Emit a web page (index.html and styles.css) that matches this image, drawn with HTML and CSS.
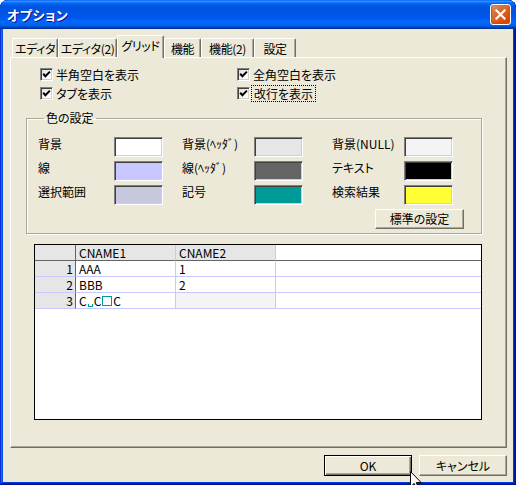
FILE: index.html
```html
<!DOCTYPE html>
<html lang="ja">
<head>
<meta charset="utf-8">
<title>オプション</title>
<link rel="stylesheet" href="styles.css">
</head>
<body>
<div class="window">
  <div class="titlebar">
    <span class="title">オプション</span>
    <span class="close">
      <svg width="11" height="11" viewBox="0 0 11 11"><path d="M1.5 1.5 L9.5 9.5 M9.5 1.5 L1.5 9.5" stroke="#fff" stroke-width="2.2" stroke-linecap="square"/></svg>
    </span>
  </div>
  <div class="client">
    <div class="tabs">
      <div class="tab tab-w46">エディタ</div>
      <div class="tab tab-w59">エディタ(2)</div>
      <div class="tab tab-w47 active">グリッド</div>
      <div class="tab tab-w37">機能</div>
      <div class="tab tab-w53">機能(2)</div>
      <div class="tab tab-w42">設定</div>
    </div>
    <div class="panel">
      <div class="checks">
        <label class="check"><span class="box"><svg width="9" height="9" viewBox="0 0 9 9"><path d="M1.2 3.8 L3.4 6.2 L7.9 1.6" fill="none" stroke="#000" stroke-width="2"/></svg></span><span>半角空白を表示</span></label>
        <label class="check"><span class="box"><svg width="9" height="9" viewBox="0 0 9 9"><path d="M1.2 3.8 L3.4 6.2 L7.9 1.6" fill="none" stroke="#000" stroke-width="2"/></svg></span><span>全角空白を表示</span></label>
        <label class="check"><span class="box"><svg width="9" height="9" viewBox="0 0 9 9"><path d="M1.2 3.8 L3.4 6.2 L7.9 1.6" fill="none" stroke="#000" stroke-width="2"/></svg></span><span>タブを表示</span></label>
        <label class="check"><span class="box"><svg width="9" height="9" viewBox="0 0 9 9"><path d="M1.2 3.8 L3.4 6.2 L7.9 1.6" fill="none" stroke="#000" stroke-width="2"/></svg></span><span class="focus">改行を表示</span></label>
      </div>
      <fieldset class="group">
        <legend>色の設定</legend>
        <div class="colors">
          <span class="clabel">背景</span><span class="swatch sw-white"></span>
          <span class="clabel">背景(ﾍｯﾀﾞ)</span><span class="swatch sw-header"></span>
          <span class="clabel">背景(NULL)</span><span class="swatch sw-null"></span>
          <span class="clabel">線</span><span class="swatch sw-line"></span>
          <span class="clabel">線(ﾍｯﾀﾞ)</span><span class="swatch sw-hline"></span>
          <span class="clabel">テキスト</span><span class="swatch sw-text"></span>
          <span class="clabel">選択範囲</span><span class="swatch sw-select"></span>
          <span class="clabel">記号</span><span class="swatch sw-symbol"></span>
          <span class="clabel">検索結果</span><span class="swatch sw-search"></span>
        </div>
        <div class="group-actions">
          <button class="btn btn-default-set">標準の設定</button>
        </div>
      </fieldset>
      <div class="grid">
        <div class="cell head corner"></div>
        <div class="cell head">CNAME1</div>
        <div class="cell head">CNAME2</div>
        <div class="cell head filler"></div>

        <div class="cell rowhead">1</div>
        <div class="cell">AAA</div>
        <div class="cell">1</div>
        <div class="cell filler"></div>

        <div class="cell rowhead">2</div>
        <div class="cell">BBB</div>
        <div class="cell">2</div>
        <div class="cell filler"></div>

        <div class="cell rowhead">3</div>
        <div class="cell">C<span class="sp-half"></span>C<span class="sp-full"></span>C</div>
        <div class="cell null"></div>
        <div class="cell filler"></div>
      </div>
    </div>
    <div class="buttons">
      <button class="btn btn-ok">OK</button>
      <button class="btn">キャンセル</button>
    </div>
  </div>
  <svg class="cursor" width="12" height="19" viewBox="0 0 12 19"><path d="M0.5 0.5 L0.5 16 L4.2 12.4 L6.8 18.5 L8.8 17.6 L6.3 11.6 L11.2 11.6 Z" fill="#fff" stroke="#000" stroke-width="1"/></svg>
</div>
</body>
</html>
```
FILE: styles.css
```css
* { box-sizing: border-box; }
html, body { margin: 0; padding: 0; background: #fff; }
body {
  font-family: "Noto Sans CJK JP", "Noto Sans", sans-serif;
  font-size: 12px;
  line-height: 1;
  color: #000;
  font-feature-settings: "palt";
}
.window {
  position: relative;
  width: 516px;
  height: 485px;
  overflow: hidden;
  border-radius: 8px 8px 0 0;
  background: #0831d9;
  box-shadow: inset -1px -1px #00138c, inset 1px 1px #0831d9, inset -2px -2px #001ea0, inset 2px 2px #166aee, inset -3px -3px #003bda, inset 3px 3px #0855dd;
  display: flex;
  flex-direction: column;
}
.titlebar {
  height: 29px;
  flex: none;
  display: flex;
  align-items: center;
  justify-content: space-between;
  padding: 0 5px 0 7px;
  border-radius: 8px 8px 0 0;
  background: linear-gradient(to bottom, #0058ee 0%, #3593ff 4%, #288eff 6%, #127dff 8%, #036ffc 10%, #0262ee 14%, #0057e5 20%, #0054e3 24%, #0055eb 56%, #005bf5 66%, #026afe 76%, #0062ef 86%, #0052d6 92%, #0040ab 94%, #003092 100%);
}
.title {
  color: #fff;
  font-weight: bold;
  font-size: 13px;
  text-shadow: 1px 1px #0f1089;
  letter-spacing: 0.5px;
}
.close {
  width: 21px;
  height: 21px;
  border: 1px solid #fff;
  border-radius: 3px;
  display: flex;
  align-items: center;
  justify-content: center;
  background: radial-gradient(circle at 90% 90%, #cc4600 0%, #dc6527 55%, #cd7546 68%, #e2a57f 100%);
  box-shadow: inset 0 -1px 2px 1px #da4600;
}
.client {
  flex: 1;
  margin: 0 3px 3px;
  background: #ece9d8;
  padding: 6px 6px 0 7px;
  display: flex;
  flex-direction: column;
}
.tabs {
  display: flex;
  align-items: flex-end;
  height: 22px;
  padding-left: 2px;
  position: relative;
  z-index: 1;
}
.tab {
  height: 19px;
  display: flex;
  align-items: center;
  justify-content: center;
  padding-top: 1px;
  background: #ece9d8;
  border-top: 1px solid #fff;
  border-left: 1px solid #fff;
  border-right: 1px solid #716f64;
  box-shadow: inset -1px 0 #aca899;
  border-radius: 2px 2px 0 0;
  white-space: nowrap;
  letter-spacing: -0.4px;
}
.tab.active {
  height: 23px;
  margin-bottom: -1px;
  padding-bottom: 3px;
}
.tab-w46 { width: 46px; }
.tab-w59 { width: 59px; }
.tab-w47 { width: 47px; }
.tab-w37 { width: 37px; }
.tab-w53 { width: 53px; }
.tab-w42 { width: 42px; }
.panel {
  flex: none;
  width: 497px;
  height: 391px;
  border-top: 1px solid #fff;
  border-left: 1px solid #fff;
  border-right: 1px solid #716f64;
  border-bottom: 1px solid #716f64;
  box-shadow: inset -1px -1px #aca899;
  display: flex;
  flex-direction: column;
  align-items: flex-start;
}
.checks {
  margin: 8px 0 0 29px;
  display: grid;
  grid-template-columns: 197px auto;
  grid-auto-rows: 17px;
  row-gap: 2px;
}
.check {
  display: flex;
  align-items: center;
  gap: 3px;
  white-space: nowrap;
}
.box {
  width: 13px;
  height: 13px;
  flex: none;
  background: linear-gradient(135deg, #dcdcd7 0%, #fff 80%);
  border: 1px solid;
  border-color: #808080 #fff #fff #808080;
  box-shadow: inset 1px 1px #404040, inset -1px -1px #d4d0c8;
  display: flex;
  align-items: center;
  justify-content: center;
}
.box svg { display: block; }
.focus {
  outline: 1px dotted #000;
  outline-offset: 1px;
  padding: 1px 1px 0;
}
.group {
  margin: 10px 0 0 15px;
  width: 456px;
  padding: 13px 17px 4px 11px;
  border: 1px solid #aca899;
  box-shadow: inset 1px 1px #fff, 1px 1px #fff;
  min-inline-size: 0;
}
.group legend {
  padding: 0 2px;
  margin-left: 6px;
  line-height: 12px;
}
.colors {
  display: grid;
  grid-template-columns: 76px 68px 72px 78px 72px 49px;
  grid-auto-rows: 20px;
  row-gap: 4px;
}
.clabel {
  padding-top: 1px;
  white-space: nowrap;
}
.swatch {
  width: 49px;
  height: 20px;
  border: 1px solid;
  border-color: #808080 #fff #fff #808080;
  box-shadow: inset 1px 1px #404040, inset -1px -1px #d4d0c8;
}
.sw-white { background: #fff; }
.sw-header { background: #e6e6e6; }
.sw-null { background: #f4f4f4; }
.sw-line { background: #c8c8ff; }
.sw-hline { background: #646464; }
.sw-text { background: #000; }
.sw-select { background: #c8c8dc; }
.sw-symbol { background: #009b96; }
.sw-search { background: #ffff33; }
.group-actions {
  display: flex;
  justify-content: flex-end;
  margin-top: 4px;
}
.btn {
  font: inherit;
  font-feature-settings: "palt";
  color: #000;
  background: #ece9d8;
  border: 1px solid;
  border-color: #fff #716f64 #716f64 #fff;
  box-shadow: inset -1px -1px #aca899;
  padding: 0;
  height: 20px;
  display: flex;
  align-items: center;
  justify-content: center;
}
.btn-default-set { width: 89px; }
.grid {
  margin: 10px 0 0 23px;
  width: 448px;
  height: 176px;
  border: 1px solid #000;
  background: #fff;
  display: grid;
  grid-template-columns: 41px 100px 100px 1fr;
  grid-auto-rows: 16px;
  align-content: start;
}
.cell {
  border-right: 1px solid #c8c8ff;
  border-bottom: 1px solid #c8c8ff;
  padding: 0 3px;
  display: flex;
  align-items: center;
  white-space: nowrap;
  overflow: hidden;
}
.cell.head {
  background: #e6e6e6;
  border-bottom-color: #646464;
  border-right-color: #c8c8ff;
}
.cell.head.filler { background: #fff; }
.cell.filler { border-right: none; }
.cell.rowhead {
  background: #e6e6e6;
  justify-content: flex-end;
  padding-right: 2px;
  border-right-color: #646464;
}
.cell.corner { border-right-color: #646464; }
.cell.null { background: #f4f4f4; }
.sp-half {
  display: inline-block;
  width: 5px;
  height: 3px;
  margin: 9px 1px 0;
  border: 1px solid #009b96;
  border-top: none;
}
.sp-full {
  display: inline-block;
  width: 10px;
  height: 10px;
  margin: 0 1px;
  border: 1px solid #009b96;
}
.buttons {
  display: flex;
  justify-content: flex-end;
  gap: 7px;
  margin-top: 7px;
}
.buttons .btn {
  width: 88px;
  height: 21px;
}
.btn-ok {
  outline: 1px solid #000;
  outline-offset: -1px;
  border-color: #000;
  box-shadow: inset 1px 1px #fff, inset -1px -1px #716f64, inset -2px -2px #aca899;
}
.cursor {
  position: absolute;
  left: 410px;
  top: 471px;
}
```
